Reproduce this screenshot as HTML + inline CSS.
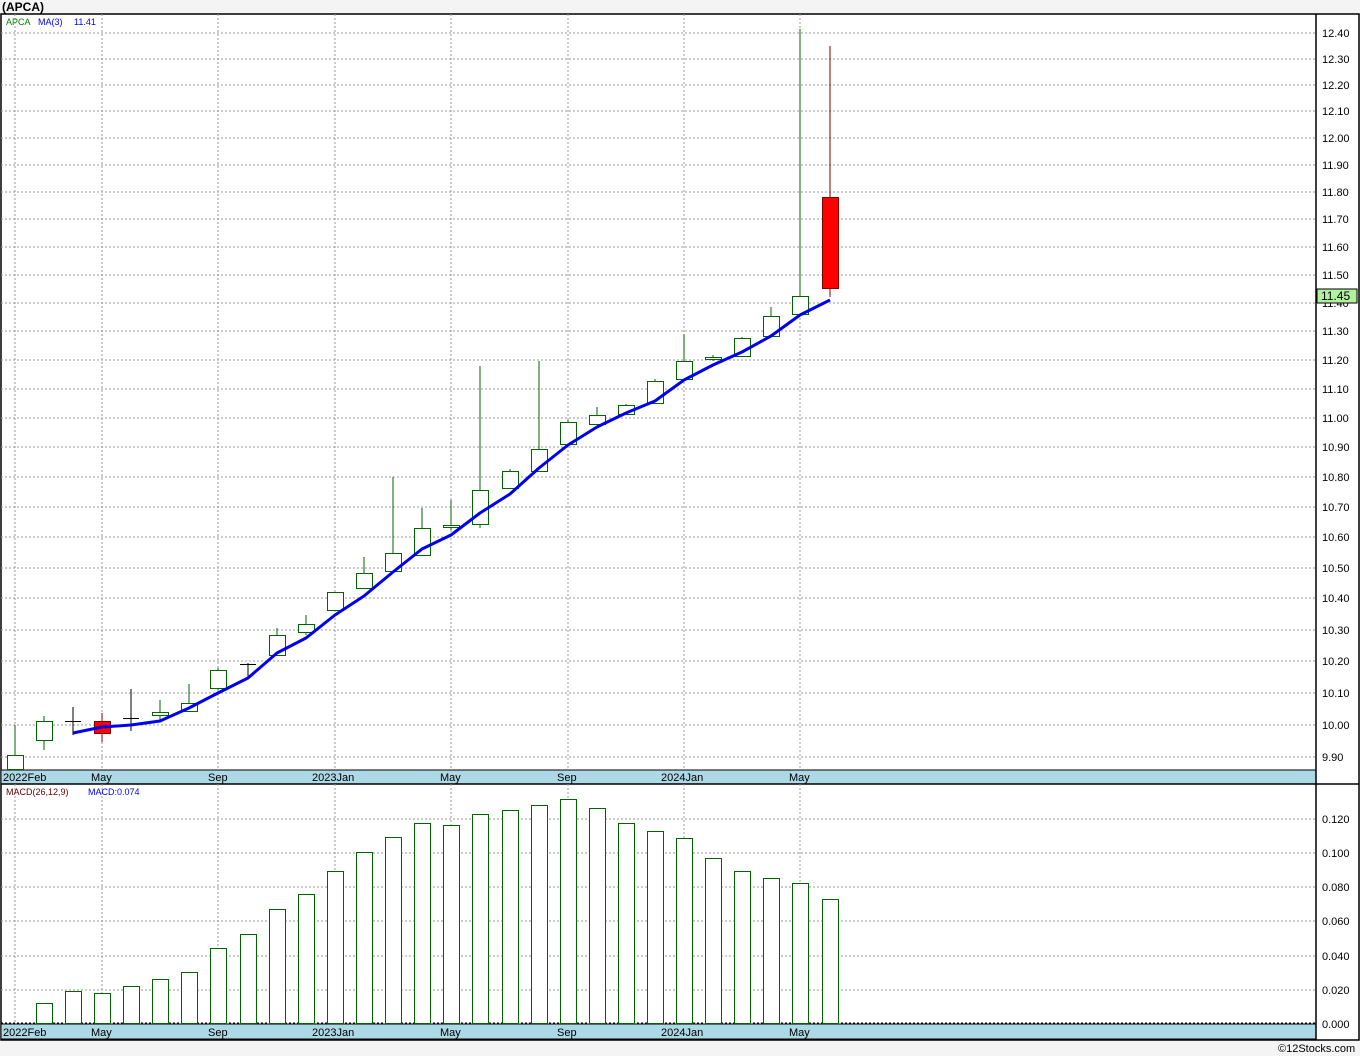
<!DOCTYPE html>
<html><head><meta charset="utf-8"><style>
body{margin:0;background:#f4f4f4;}
svg{display:block;font-family:"Liberation Sans",sans-serif;}
</style></head><body>
<svg width="1360" height="1056" viewBox="0 0 1360 1056" xmlns="http://www.w3.org/2000/svg">
<rect x="0" y="0" width="1360" height="1056" fill="#f4f4f4"/>
<text x="2" y="11" font-size="12" font-weight="bold" fill="#000">(APCA)</text>
<rect x="1" y="14" width="1358" height="1026" fill="#fff" stroke="#000" stroke-width="1.5"/>
<rect x="1" y="770" width="1315" height="14" fill="#add8e6" stroke="#000" stroke-width="1"/>
<rect x="1" y="1024" width="1315" height="15" fill="#add8e6" stroke="#000" stroke-width="1"/>
<line x1="1" y1="784" x2="1359" y2="784" stroke="#000" stroke-width="1.5"/>
<line x1="1316" y1="14" x2="1316" y2="1040" stroke="#000" stroke-width="1.5"/>
<g stroke="#999" stroke-dasharray="2,2" stroke-width="1">
<line x1="15" y1="14" x2="15" y2="770"/>
<line x1="102" y1="14" x2="102" y2="770"/><line x1="218" y1="14" x2="218" y2="770"/><line x1="335" y1="14" x2="335" y2="770"/><line x1="451" y1="14" x2="451" y2="770"/><line x1="568" y1="14" x2="568" y2="770"/><line x1="684" y1="14" x2="684" y2="770"/><line x1="800" y1="14" x2="800" y2="770"/>
<line x1="15" y1="784" x2="15" y2="1024"/>
<line x1="102" y1="784" x2="102" y2="1024"/><line x1="218" y1="784" x2="218" y2="1024"/><line x1="335" y1="784" x2="335" y2="1024"/><line x1="451" y1="784" x2="451" y2="1024"/><line x1="568" y1="784" x2="568" y2="1024"/><line x1="684" y1="784" x2="684" y2="1024"/><line x1="800" y1="784" x2="800" y2="1024"/>
<line x1="1" y1="33" x2="1316" y2="33"/><line x1="1" y1="59" x2="1316" y2="59"/><line x1="1" y1="85" x2="1316" y2="85"/><line x1="1" y1="111" x2="1316" y2="111"/><line x1="1" y1="138" x2="1316" y2="138"/><line x1="1" y1="165" x2="1316" y2="165"/><line x1="1" y1="192" x2="1316" y2="192"/><line x1="1" y1="219" x2="1316" y2="219"/><line x1="1" y1="247" x2="1316" y2="247"/><line x1="1" y1="275" x2="1316" y2="275"/><line x1="1" y1="303" x2="1316" y2="303"/><line x1="1" y1="331" x2="1316" y2="331"/><line x1="1" y1="360" x2="1316" y2="360"/><line x1="1" y1="389" x2="1316" y2="389"/><line x1="1" y1="418" x2="1316" y2="418"/><line x1="1" y1="447" x2="1316" y2="447"/><line x1="1" y1="477" x2="1316" y2="477"/><line x1="1" y1="507" x2="1316" y2="507"/><line x1="1" y1="537" x2="1316" y2="537"/><line x1="1" y1="568" x2="1316" y2="568"/><line x1="1" y1="598" x2="1316" y2="598"/><line x1="1" y1="630" x2="1316" y2="630"/><line x1="1" y1="661" x2="1316" y2="661"/><line x1="1" y1="693" x2="1316" y2="693"/><line x1="1" y1="725" x2="1316" y2="725"/><line x1="1" y1="757" x2="1316" y2="757"/>
<line x1="1" y1="819" x2="1316" y2="819"/><line x1="1" y1="853" x2="1316" y2="853"/><line x1="1" y1="887" x2="1316" y2="887"/><line x1="1" y1="921" x2="1316" y2="921"/><line x1="1" y1="956" x2="1316" y2="956"/><line x1="1" y1="990" x2="1316" y2="990"/><line x1="1" y1="1023" x2="1316" y2="1023" stroke="#000"/>
</g>
<g font-size="11" fill="#000" text-anchor="start">
<text x="1322" y="37">12.40</text><text x="1322" y="63">12.30</text><text x="1322" y="89">12.20</text><text x="1322" y="115">12.10</text><text x="1322" y="142">12.00</text><text x="1322" y="169">11.90</text><text x="1322" y="196">11.80</text><text x="1322" y="223">11.70</text><text x="1322" y="251">11.60</text><text x="1322" y="279">11.50</text><text x="1322" y="307">11.40</text><text x="1322" y="335">11.30</text><text x="1322" y="364">11.20</text><text x="1322" y="393">11.10</text><text x="1322" y="422">11.00</text><text x="1322" y="451">10.90</text><text x="1322" y="481">10.80</text><text x="1322" y="511">10.70</text><text x="1322" y="541">10.60</text><text x="1322" y="572">10.50</text><text x="1322" y="602">10.40</text><text x="1322" y="634">10.30</text><text x="1322" y="665">10.20</text><text x="1322" y="697">10.10</text><text x="1322" y="729">10.00</text><text x="1322" y="761">9.90</text>
<text x="1322" y="823">0.120</text><text x="1322" y="857">0.100</text><text x="1322" y="891">0.080</text><text x="1322" y="925">0.060</text><text x="1322" y="960">0.040</text><text x="1322" y="994">0.020</text><text x="1322" y="1028">0.000</text>
</g>
<rect x="1317" y="289" width="40" height="14" fill="#b0f0a0" stroke="#000"/>
<text x="1321" y="300" font-size="12">11.45</text>
<g font-size="11" fill="#000">
<text x="3" y="781">2022Feb</text><text x="91" y="781">May</text><text x="208" y="781">Sep</text><text x="312" y="781">2023Jan</text><text x="440" y="781">May</text><text x="557" y="781">Sep</text><text x="661" y="781">2024Jan</text><text x="789" y="781">May</text>
<text x="3" y="1036">2022Feb</text><text x="91" y="1036">May</text><text x="208" y="1036">Sep</text><text x="312" y="1036">2023Jan</text><text x="440" y="1036">May</text><text x="557" y="1036">Sep</text><text x="661" y="1036">2024Jan</text><text x="789" y="1036">May</text>
</g>
<text x="6" y="25" font-size="9" fill="#008000">APCA</text>
<text x="38" y="25" font-size="9" fill="#00f">MA(3)</text>
<text x="74" y="25" font-size="9" fill="#00f">11.41</text>
<text x="6" y="795" font-size="9" fill="#600">MACD(26,12,9)</text>
<text x="88" y="795" font-size="9" fill="#00f">MACD:0.074</text>
<text x="1278" y="1052" font-size="11" fill="#000">©12Stocks.com</text>
<!-- candles -->
<g stroke="#006400" stroke-width="1" fill="#fff">
<line x1="15" y1="725" x2="15" y2="770"/><rect x="7.5" y="755.5" width="16" height="14"/>
<line x1="44" y1="716" x2="44" y2="750"/><rect x="36.5" y="721.5" width="16" height="19"/>
<line x1="131" y1="689" x2="131" y2="731" stroke="#000"/><line x1="123" y1="718.5" x2="139" y2="718.5" stroke="#000"/>
<line x1="73" y1="707" x2="73" y2="735" stroke="#000"/><line x1="65" y1="721.5" x2="81" y2="721.5" stroke="#000"/>
<line x1="160" y1="700" x2="160" y2="720"/><rect x="152.5" y="712.5" width="16" height="3"/>
<line x1="189" y1="684" x2="189" y2="712"/><rect x="181.5" y="703.5" width="16" height="8"/>
<line x1="218" y1="668" x2="218" y2="690"/><rect x="210.5" y="670.5" width="16" height="18"/>
<line x1="248" y1="663" x2="248" y2="678" stroke="#000"/><line x1="240" y1="664.5" x2="256" y2="664.5" stroke="#000"/>
<line x1="277" y1="628" x2="277" y2="656"/><rect x="269.5" y="635.5" width="16" height="20"/>
<line x1="306" y1="615" x2="306" y2="635"/><rect x="298.5" y="624.5" width="16" height="8"/>
<line x1="335" y1="592" x2="335" y2="611"/><rect x="327.5" y="592.5" width="16" height="18"/>
<line x1="364" y1="557" x2="364" y2="589"/><rect x="356.5" y="573.5" width="16" height="15"/>
<line x1="393" y1="477" x2="393" y2="572"/><rect x="385.5" y="553.5" width="16" height="18"/>
<line x1="422" y1="508" x2="422" y2="556"/><rect x="414.5" y="528.5" width="16" height="27"/>
<line x1="451" y1="500" x2="451" y2="530"/><rect x="443.5" y="525.5" width="16" height="2"/>
<line x1="480" y1="366" x2="480" y2="528"/><rect x="472.5" y="490.5" width="16" height="34"/>
<line x1="510" y1="469" x2="510" y2="489"/><rect x="502.5" y="471.5" width="16" height="17"/>
<line x1="539" y1="361" x2="539" y2="472"/><rect x="531.5" y="449.5" width="16" height="22"/>
<line x1="568" y1="420" x2="568" y2="445"/><rect x="560.5" y="422.5" width="16" height="22"/>
<line x1="597" y1="407" x2="597" y2="425"/><rect x="589.5" y="415.5" width="16" height="9"/>
<line x1="626" y1="404" x2="626" y2="415"/><rect x="618.5" y="405.5" width="16" height="9"/>
<line x1="655" y1="379" x2="655" y2="404"/><rect x="647.5" y="381.5" width="16" height="22"/>
<line x1="684" y1="334" x2="684" y2="380"/><rect x="676.5" y="361.5" width="16" height="18"/>
<line x1="713" y1="355" x2="713" y2="361"/><rect x="705.5" y="357.5" width="16" height="2"/>
<line x1="742" y1="337" x2="742" y2="357"/><rect x="734.5" y="338.5" width="16" height="18"/>
<line x1="771" y1="307" x2="771" y2="337"/><rect x="763.5" y="316.5" width="16" height="20"/>
<line x1="800" y1="29" x2="800" y2="316"/><rect x="792.5" y="296.5" width="16" height="18"/>
</g>
<line x1="102" y1="713" x2="102" y2="742" stroke="#800000"/><rect x="94.5" y="721.5" width="16" height="12" fill="#f00" stroke="#800000"/>
<line x1="830" y1="46" x2="830" y2="297" stroke="#800000"/><rect x="822.5" y="197.5" width="16" height="91" fill="#f00" stroke="#800000"/>
<polyline fill="none" stroke="#0000ee" stroke-width="3" stroke-linejoin="round" points="73,733 102,727 131,725 160,721 189,708 218,693 248,678 277,653 306,638 335,615 364,596 393,572 422,549 451,535 480,513 510,494 539,468 568,445 597,427 626,413 655,401 684,380 713,365 742,352 771,336 800,315 830,300"/>
<!-- MACD bars -->
<g stroke="#006400" fill="#fff">
<rect x="36.5" y="1003.5" width="16" height="20"/><rect x="65.5" y="991.5" width="16" height="32"/><rect x="94.5" y="993.5" width="16" height="30"/><rect x="123.5" y="986.5" width="16" height="37"/><rect x="152.5" y="979.5" width="16" height="44"/><rect x="181.5" y="972.5" width="16" height="51"/><rect x="210.5" y="948.5" width="16" height="75"/><rect x="240.5" y="934.5" width="16" height="89"/><rect x="269.5" y="909.5" width="16" height="114"/><rect x="298.5" y="894.5" width="16" height="129"/><rect x="327.5" y="871.5" width="16" height="152"/><rect x="356.5" y="852.5" width="16" height="171"/><rect x="385.5" y="837.5" width="16" height="186"/><rect x="414.5" y="823.5" width="16" height="200"/><rect x="443.5" y="825.5" width="16" height="198"/><rect x="472.5" y="814.5" width="16" height="209"/><rect x="502.5" y="810.5" width="16" height="213"/><rect x="531.5" y="805.5" width="16" height="218"/><rect x="560.5" y="799.5" width="16" height="224"/><rect x="589.5" y="808.5" width="16" height="215"/><rect x="618.5" y="823.5" width="16" height="200"/><rect x="647.5" y="831.5" width="16" height="192"/><rect x="676.5" y="838.5" width="16" height="185"/><rect x="705.5" y="858.5" width="16" height="165"/><rect x="734.5" y="871.5" width="16" height="152"/><rect x="763.5" y="878.5" width="16" height="145"/><rect x="792.5" y="883.5" width="16" height="140"/><rect x="822.5" y="899.5" width="16" height="124"/>
</g>
</svg>
</body></html>
